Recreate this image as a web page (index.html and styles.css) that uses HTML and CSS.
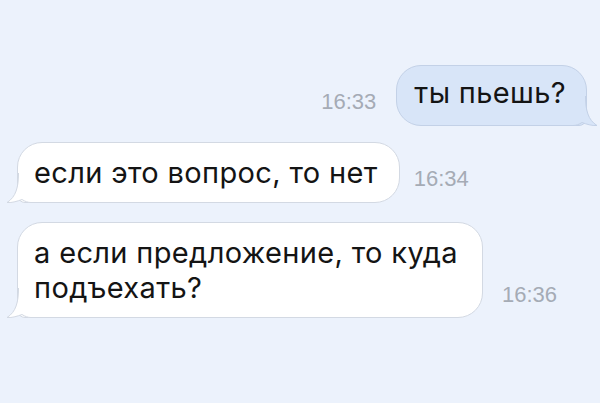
FILE: index.html
```html
<!DOCTYPE html>
<html lang="ru">
<head>
    <meta charset="utf-8">
    <title>Сообщения</title>
    <meta name="viewport" content="width=device-width, initial-scale=1">
    <link rel="stylesheet" href="styles.css">
</head>
<body>
    <div class="chat">
        <div class="row out">
            <span class="time">16:33</span>
            <div class="bubble">
                ты пьешь?
                <svg class="tail" width="26" height="30" viewBox="0 0 26 30">
                    <path class="tail-fill" d="M0 0 H12.5 C12.5 14 15 24 24 29.5 C19 30 13 28 9 26.5 C6 28.5 3 29.5 0 29.5 Z"/>
                    <path class="tail-edge" d="M12.5 0 C12.5 14 15 24 24 29.5 C19 30 13 28 9 26.5 C6 28.5 3 29.5 0 29.5"/>
                </svg>
            </div>
        </div>

        <div class="row in">
            <div class="bubble">
                если это вопрос, то нет
                <svg class="tail" width="26" height="30" viewBox="0 0 26 30">
                    <path class="tail-fill" d="M0 0 H12.5 C12.5 14 15 24 24 29.5 C19 30 13 28 9 26.5 C6 28.5 3 29.5 0 29.5 Z"/>
                    <path class="tail-edge" d="M12.5 0 C12.5 14 15 24 24 29.5 C19 30 13 28 9 26.5 C6 28.5 3 29.5 0 29.5"/>
                </svg>
            </div>
            <span class="time">16:34</span>
        </div>

        <div class="row in">
            <div class="bubble wide">
                а если предложение, то куда подъехать?
                <svg class="tail" width="26" height="30" viewBox="0 0 26 30">
                    <path class="tail-fill" d="M0 0 H12.5 C12.5 14 15 24 24 29.5 C19 30 13 28 9 26.5 C6 28.5 3 29.5 0 29.5 Z"/>
                    <path class="tail-edge" d="M12.5 0 C12.5 14 15 24 24 29.5 C19 30 13 28 9 26.5 C6 28.5 3 29.5 0 29.5"/>
                </svg>
            </div>
            <span class="time">16:36</span>
        </div>
    </div>
</body>
</html>
```

FILE: styles.css
```css
html,
body {
    margin: 0;
    height: 100%;
}
body {
    background-color: #ecf2fc;
    font-family: "Liberation Sans", Arial, sans-serif;
    color: #141414;
}
.chat {
    display: flex;
    flex-direction: column;
    padding: 65px 13px 0 17px;
}
.row {
    display: flex;
    align-items: flex-end;
    gap: 14px;
}
.row + .row {
    margin-top: 16px;
}
.row.in + .row.in {
    margin-top: 19px;
}
.row.out {
    justify-content: flex-end;
    gap: 20px;
}
.row.in {
    justify-content: flex-start;
}
.time {
    font-size: 22px;
    line-height: 22px;
    color: #a5abb5;
    margin-bottom: 13px;
    white-space: nowrap;
}
.wide + .time {
    margin-left: 5px;
    margin-bottom: 12px;
}
.bubble {
    position: relative;
    box-sizing: border-box;
    max-width: 466px;
    font-family: Inter, "Liberation Sans", sans-serif;
    font-size: 29px;
    line-height: 35px;
    letter-spacing: 0.35px;
    border: 1px solid #d3d9e3;
    border-radius: 25px;
}
.out .bubble {
    background-color: #d8e5f8;
    border-color: #c3d1e7;
    padding: 9px 20px 15px 17px;
    border-bottom-right-radius: 8px;
}
.in .bubble {
    background-color: #ffffff;
    padding: 12px 21px 12px 16px;
    border-bottom-left-radius: 8px;
}
.bubble.wide {
    width: 466px;
}

/* the little hook under the corner of each bubble */
.tail {
    position: absolute;
    bottom: -1px;
    display: block;
}
.out .tail {
    right: -13px;
}
.in .tail {
    left: -13px;
    transform: scaleX(-1);
}
.tail-fill {
    stroke: none;
}
.tail-edge {
    fill: none;
    stroke-width: 1;
}
.out .tail-fill {
    fill: #d8e5f8;
}
.out .tail-edge {
    stroke: #c3d1e7;
}
.in .tail-fill {
    fill: #ffffff;
}
.in .tail-edge {
    stroke: #d3d9e3;
}
```
